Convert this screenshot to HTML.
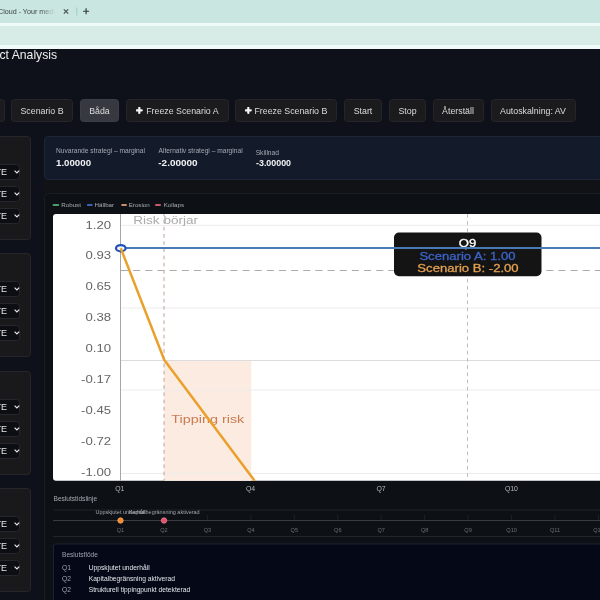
<!DOCTYPE html>
<html><head><meta charset="utf-8">
<style>
*{box-sizing:border-box;margin:0;padding:0}
html,body{width:600px;height:600px;overflow:hidden;background:#0e1119;font-family:"Liberation Sans",sans-serif}
.abs{position:absolute}
#tabbar{left:0;top:0;width:600px;height:23px;background:#cae6e0}
#wl1{left:0;top:23px;width:600px;height:3px;background:#eefaf8}
#addr{left:0;top:26px;width:600px;height:19px;background:#d8ece7}
#wl2{left:0;top:45px;width:600px;height:3.5px;background:#f0fbf9}
.tabtxt{left:-2.3px;top:7.1px;font-size:7.6px;color:#36413f;white-space:nowrap;line-height:10px;transform:scaleX(0.94);transform-origin:0 0}
.btn{position:absolute;top:99.2px;height:23px;border:1px solid #252629;background:#1b1b1d;border-radius:3.5px;color:#dcdcdc;font-size:8.8px;line-height:22.6px;white-space:nowrap;text-align:center}
.btn.act{background:#363940;border-color:#3b3e45}
.card{position:absolute;left:-20px;width:51px;height:104px;background:#19191b;border:1px solid #26262a;border-radius:4px}
.sel{position:absolute;left:-20px;width:39.5px;height:15.5px;background:#0d0e13;border-radius:3.5px;border:1px solid #26262b}
.sel span{position:absolute;right:11.4px;top:0;font-size:9px;line-height:15px;color:#e4e4e4}
.sel svg{position:absolute;left:32.7px;top:5.2px}
#root{position:absolute;left:0;top:0;width:600px;height:600px;overflow:hidden;background:#0e1119;will-change:transform}
</style></head><body><div id="root">
<div id="tabbar" class="abs"></div>
<div class="abs tabtxt">Cloud - Your medi</div>
<div class="abs" style="left:40px;top:0;width:17px;height:23px;background:linear-gradient(90deg,rgba(202,230,224,0),#cae6e0 90%)"></div>
<svg class="abs" style="left:0;top:0" width="100" height="23">
  <path d="M63.8 9.3 L68.2 13.7 M68.2 9.3 L63.8 13.7" stroke="#3f4a48" stroke-width="1.05"/>
  <rect x="76.3" y="7.5" width="1" height="8" fill="#a0cec4"/>
  <path d="M86.1 8.2 V14.2 M83.1 11.2 H89.1" stroke="#2f3a38" stroke-width="1.15"/>
</svg>
<div id="wl1" class="abs"></div>
<div id="addr" class="abs"></div>
<div id="wl2" class="abs"></div>

<div class="abs" style="left:-0.5px;top:47.9px;font-size:12.2px;line-height:14px;color:#eceef0;white-space:nowrap">ct Analysis</div>

<div class="btn" style="left:-58px;width:63px">Scenario A</div>
<div class="btn" style="left:11px;width:62px">Scenario B</div>
<div class="btn act" style="left:80px;width:39px">Båda</div>
<div class="btn" style="left:126px;width:103px"><svg width="7" height="7" viewBox="0 0 7 7" style="display:inline-block;vertical-align:0.3px;margin-right:2.8px"><path d="M3.3 0.8 V5.9 M0.8 3.35 H5.8" stroke="#f4f4f4" stroke-width="2.2" stroke-linecap="round"/></svg>Freeze Scenario A</div>
<div class="btn" style="left:235px;width:102px"><svg width="7" height="7" viewBox="0 0 7 7" style="display:inline-block;vertical-align:0.3px;margin-right:2.8px"><path d="M3.3 0.8 V5.9 M0.8 3.35 H5.8" stroke="#f4f4f4" stroke-width="2.2" stroke-linecap="round"/></svg>Freeze Scenario B</div>
<div class="btn" style="left:344px;width:38px">Start</div>
<div class="btn" style="left:389px;width:37px">Stop</div>
<div class="btn" style="left:432.5px;width:51px">Återställ</div>
<div class="btn" style="left:490.5px;width:85px">Autoskalning: AV</div>

<!-- left cards -->
<div class="card" style="top:136px"></div>
<div class="card" style="top:253px"></div>
<div class="card" style="top:371px"></div>
<div class="card" style="top:488px"></div>
<div class="sel" style="top:164.1px"><span>TE</span><svg width="6" height="4" viewBox="0 0 6 4"><path d="M0.6 0.6 L2.9 2.9 L5.2 0.6" fill="none" stroke="#e8e8e8" stroke-width="1.15"/></svg></div>
<div class="sel" style="top:186.1px"><span>TE</span><svg width="6" height="4" viewBox="0 0 6 4"><path d="M0.6 0.6 L2.9 2.9 L5.2 0.6" fill="none" stroke="#e8e8e8" stroke-width="1.15"/></svg></div>
<div class="sel" style="top:208.1px"><span>TE</span><svg width="6" height="4" viewBox="0 0 6 4"><path d="M0.6 0.6 L2.9 2.9 L5.2 0.6" fill="none" stroke="#e8e8e8" stroke-width="1.15"/></svg></div>
<div class="sel" style="top:281.1px"><span>TE</span><svg width="6" height="4" viewBox="0 0 6 4"><path d="M0.6 0.6 L2.9 2.9 L5.2 0.6" fill="none" stroke="#e8e8e8" stroke-width="1.15"/></svg></div>
<div class="sel" style="top:303.1px"><span>TE</span><svg width="6" height="4" viewBox="0 0 6 4"><path d="M0.6 0.6 L2.9 2.9 L5.2 0.6" fill="none" stroke="#e8e8e8" stroke-width="1.15"/></svg></div>
<div class="sel" style="top:325.1px"><span>TE</span><svg width="6" height="4" viewBox="0 0 6 4"><path d="M0.6 0.6 L2.9 2.9 L5.2 0.6" fill="none" stroke="#e8e8e8" stroke-width="1.15"/></svg></div>
<div class="sel" style="top:399.1px"><span>TE</span><svg width="6" height="4" viewBox="0 0 6 4"><path d="M0.6 0.6 L2.9 2.9 L5.2 0.6" fill="none" stroke="#e8e8e8" stroke-width="1.15"/></svg></div>
<div class="sel" style="top:421.1px"><span>TE</span><svg width="6" height="4" viewBox="0 0 6 4"><path d="M0.6 0.6 L2.9 2.9 L5.2 0.6" fill="none" stroke="#e8e8e8" stroke-width="1.15"/></svg></div>
<div class="sel" style="top:443.1px"><span>TE</span><svg width="6" height="4" viewBox="0 0 6 4"><path d="M0.6 0.6 L2.9 2.9 L5.2 0.6" fill="none" stroke="#e8e8e8" stroke-width="1.15"/></svg></div>
<div class="sel" style="top:516.1px"><span>TE</span><svg width="6" height="4" viewBox="0 0 6 4"><path d="M0.6 0.6 L2.9 2.9 L5.2 0.6" fill="none" stroke="#e8e8e8" stroke-width="1.15"/></svg></div>
<div class="sel" style="top:538.1px"><span>TE</span><svg width="6" height="4" viewBox="0 0 6 4"><path d="M0.6 0.6 L2.9 2.9 L5.2 0.6" fill="none" stroke="#e8e8e8" stroke-width="1.15"/></svg></div>
<div class="sel" style="top:560.1px"><span>TE</span><svg width="6" height="4" viewBox="0 0 6 4"><path d="M0.6 0.6 L2.9 2.9 L5.2 0.6" fill="none" stroke="#e8e8e8" stroke-width="1.15"/></svg></div>

<!-- metrics card -->
<div class="abs" style="left:43.5px;top:136px;width:600px;height:43.8px;background:#131a2a;border:1px solid #1e2536;border-radius:4px"></div>
<div class="abs" style="left:56px;top:146px;font-size:6.65px;line-height:9px;color:#a3a9b3;white-space:nowrap">Nuvarande strategi – marginal</div>
<div class="abs" style="left:56px;top:157px;font-size:9.7px;line-height:12px;font-weight:bold;color:#f2f3f5;white-space:nowrap">1.00000</div>
<div class="abs" style="left:158.5px;top:146px;font-size:6.65px;line-height:9px;color:#a3a9b3;white-space:nowrap">Alternativ strategi – marginal</div>
<div class="abs" style="left:158.3px;top:157px;font-size:9.95px;line-height:12px;font-weight:bold;color:#f2f3f5;white-space:nowrap">-2.00000</div>
<div class="abs" style="left:255.7px;top:147.6px;font-size:6.65px;line-height:9px;color:#a3a9b3;white-space:nowrap">Skillnad</div>
<div class="abs" style="left:256px;top:157.4px;font-size:8.9px;line-height:12px;font-weight:bold;color:#f2f3f5;white-space:nowrap">-3.00000</div>

<!-- chart card -->
<div class="abs" style="left:44px;top:180px;width:600px;height:13px;background:#111216"></div>
<div class="abs" style="left:43.5px;top:192.5px;width:600px;height:500px;background:#0d1015;border:1px solid #1b1d24;border-radius:4.5px"></div>

<svg class="abs" style="left:0;top:0" width="600" height="600" viewBox="0 0 600 600">
  <g font-family="Liberation Sans" font-size="6.2" fill="#a9adb4">
    <rect x="52.6" y="204.1" width="6.6" height="1.8" rx="0.9" fill="#4c9e6e"/>
    <text x="61.3" y="206.5">Robust</text>
    <rect x="86.9" y="204.1" width="5.8" height="1.8" rx="0.9" fill="#3f62ac"/>
    <text x="94.5" y="206.5">Hällbar</text>
    <rect x="121.2" y="204.1" width="5.8" height="1.8" rx="0.9" fill="#cc8a6c"/>
    <text x="128.7" y="206.5">Erosion</text>
    <rect x="155" y="204.1" width="6" height="1.8" rx="0.9" fill="#c65b6a"/>
    <text x="163.7" y="206.5">Kollaps</text>
  </g>
  <defs><clipPath id="cl"><rect x="53" y="214" width="600" height="266.8" rx="3"/></clipPath></defs>
  <rect x="53" y="214" width="600" height="266.8" rx="3" fill="#ffffff"/>
  <g clip-path="url(#cl)">
    <rect x="164" y="360.5" width="87.2" height="130" fill="#fcebe1"/>
    <g stroke="#ececec" stroke-width="1">
      <line x1="120.5" y1="225.4" x2="600" y2="225.4"/>
      <line x1="120.5" y1="308" x2="600" y2="308"/>
      <line x1="120.5" y1="390" x2="600" y2="390"/>
      <line x1="120.5" y1="473.5" x2="600" y2="473.5"/>
    </g>
    <line x1="120.5" y1="360.5" x2="600" y2="360.5" stroke="#dcdcdc" stroke-width="1"/>
    <line x1="121" y1="270.5" x2="600" y2="270.5" stroke="#acacac" stroke-width="1" stroke-dasharray="7.1 5.05"/>
    <line x1="164" y1="214" x2="164" y2="481" stroke="#bea395" stroke-width="1" stroke-dasharray="3.7 3.5" stroke-dashoffset="1.6"/>
    <line x1="467.5" y1="214" x2="467.5" y2="481" stroke="#bcbcbc" stroke-width="1" stroke-dasharray="3.7 3.5"/>
    <line x1="120.5" y1="214" x2="120.5" y2="481" stroke="#a6a6a6" stroke-width="1"/>
    <text transform="translate(133.3,224) scale(1.29,1)" font-family="Liberation Sans" font-size="10.5" fill="#ababab">Risk börjar</text>
    <text transform="translate(171.3,423.3) scale(1.31,1)" font-family="Liberation Sans" font-size="11" fill="#c97c50">Tipping risk</text>
    <rect x="394" y="232.5" width="147.5" height="43.7" rx="5" fill="#141414"/>
    <g font-family="Liberation Sans" font-size="10.5" text-anchor="middle">
      <text transform="translate(467.5,247.2) scale(1.25,1)" fill="#ffffff" stroke="#ffffff" stroke-width="0.3">Q9</text>
      <text transform="translate(467.5,259.6) scale(1.25,1)" fill="#3b63c6" stroke="#3b63c6" stroke-width="0.3">Scenario A: 1.00</text>
      <text transform="translate(468,271.9) scale(1.25,1)" fill="#e2a052" stroke="#e2a052" stroke-width="0.3">Scenario B: -2.00</text>
    </g>
    <line x1="120.5" y1="248" x2="600" y2="248" stroke="#4a7ab6" stroke-width="2"/>
    <ellipse cx="120.8" cy="248.2" rx="4.8" ry="3.1" fill="#f4f8ff" stroke="#2150b8" stroke-width="2.2"/>
    <polyline points="120.8,248.3 164.3,360 257,484" fill="none" stroke="#e9a02c" stroke-width="2.5" stroke-linejoin="round"/>
  </g>
  <g font-family="Liberation Sans" font-size="10" fill="#666666" text-anchor="end">
<text transform="translate(111,228.50) scale(1.315,1)">1.20</text>
<text transform="translate(111,259.49) scale(1.315,1)">0.93</text>
<text transform="translate(111,290.48) scale(1.315,1)">0.65</text>
<text transform="translate(111,321.47) scale(1.315,1)">0.38</text>
<text transform="translate(111,352.46) scale(1.315,1)">0.10</text>
<text transform="translate(111,383.45) scale(1.315,1)">-0.17</text>
<text transform="translate(111,414.44) scale(1.315,1)">-0.45</text>
<text transform="translate(111,445.43) scale(1.315,1)">-0.72</text>
<text transform="translate(111,476.42) scale(1.315,1)">-1.00</text>
</g>
</svg>

<!-- below chart -->
<svg class="abs" style="left:0;top:0" width="600" height="600" viewBox="0 0 600 600">
  <g font-family="Liberation Sans" font-size="6.9" fill="#b5b8bd">
<text x="119.8" y="491" text-anchor="middle">Q1</text>
<text x="250.5" y="491" text-anchor="middle">Q4</text>
<text x="381" y="491" text-anchor="middle">Q7</text>
<text x="511.4" y="491" text-anchor="middle">Q10</text>
  </g>
  <text x="53.5" y="501" font-family="Liberation Sans" font-size="6.6" fill="#a4a8af">Beslutstidslinje</text>
  <line x1="53" y1="510" x2="600" y2="510" stroke="#20232a" stroke-width="1"/>
  <line x1="53" y1="520.5" x2="600" y2="520.5" stroke="#3a3c42" stroke-width="1"/>
  <line x1="53" y1="536.5" x2="600" y2="536.5" stroke="#23252b" stroke-width="1"/>
  <g font-family="Liberation Sans" font-size="5.5" fill="#a3a7ae" text-anchor="middle">
    <text x="120.5" y="513.6">Uppskjutet underhåll</text>
    <text x="164.2" y="513.6">Kapitalbegränsning aktiverad</text>
  </g>
  <circle cx="120.5" cy="520.5" r="2.7" fill="#f08a2c" stroke="#f5a85e" stroke-width="0.8"/>
  <circle cx="164" cy="520.5" r="2.7" fill="#e2506a" stroke="#ee8090" stroke-width="0.8"/>
  <g font-family="Liberation Sans" font-size="5.6" fill="#6c7078">
<text x="120.5" y="531.5" text-anchor="middle">Q1</text>
<text x="163.9" y="531.5" text-anchor="middle">Q2</text>
<text x="207.4" y="531.5" text-anchor="middle">Q3</text><line x1="207.4" y1="515" x2="207.4" y2="520" stroke="#23262d" stroke-width="0.8"/>
<text x="250.9" y="531.5" text-anchor="middle">Q4</text><line x1="250.9" y1="515" x2="250.9" y2="520" stroke="#23262d" stroke-width="0.8"/>
<text x="294.3" y="531.5" text-anchor="middle">Q5</text><line x1="294.3" y1="515" x2="294.3" y2="520" stroke="#23262d" stroke-width="0.8"/>
<text x="337.8" y="531.5" text-anchor="middle">Q6</text><line x1="337.8" y1="515" x2="337.8" y2="520" stroke="#23262d" stroke-width="0.8"/>
<text x="381.2" y="531.5" text-anchor="middle">Q7</text><line x1="381.2" y1="515" x2="381.2" y2="520" stroke="#23262d" stroke-width="0.8"/>
<text x="424.7" y="531.5" text-anchor="middle">Q8</text><line x1="424.7" y1="515" x2="424.7" y2="520" stroke="#23262d" stroke-width="0.8"/>
<text x="468.1" y="531.5" text-anchor="middle">Q9</text><line x1="468.1" y1="515" x2="468.1" y2="520" stroke="#23262d" stroke-width="0.8"/>
<text x="511.6" y="531.5" text-anchor="middle">Q10</text><line x1="511.6" y1="515" x2="511.6" y2="520" stroke="#23262d" stroke-width="0.8"/>
<text x="555.0" y="531.5" text-anchor="middle">Q11</text><line x1="555.0" y1="515" x2="555.0" y2="520" stroke="#23262d" stroke-width="0.8"/>
<text x="598.5" y="531.5" text-anchor="middle">Q12</text><line x1="598.5" y1="515" x2="598.5" y2="520" stroke="#23262d" stroke-width="0.8"/>
  </g>
  <rect x="53.5" y="544" width="600" height="100" rx="2" fill="#040817" stroke="#1d2333" stroke-width="1"/>
  <text x="62" y="557" font-family="Liberation Sans" font-size="6.6" fill="#9ea3ab">Beslutsflöde</text>
  <g font-family="Liberation Sans" font-size="6.7" fill="#e4e6ea">
    <text x="62" y="570.3" fill="#a2a6ad">Q1</text><text x="88.7" y="570.3">Uppskjutet underhåll</text>
    <text x="62" y="581.3" fill="#a2a6ad">Q2</text><text x="88.7" y="581.3">Kapitalbegränsning aktiverad</text>
    <text x="62" y="592" fill="#a2a6ad">Q2</text><text x="88.7" y="592">Strukturell tippingpunkt detekterad</text>
  </g>
</svg>
</div></body></html>
